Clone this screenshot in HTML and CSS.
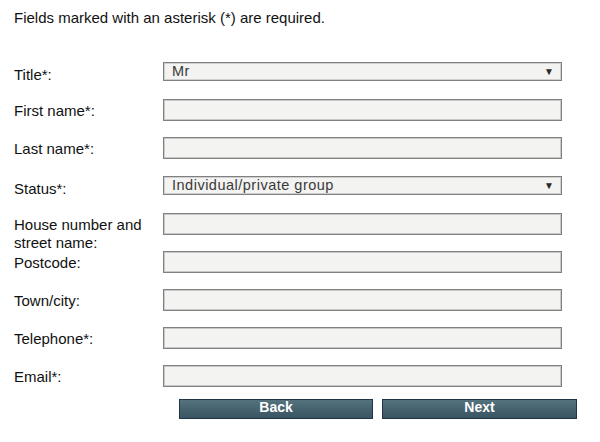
FILE: index.html
```html
<!DOCTYPE html>
<html lang="en">
<head>
<meta charset="utf-8">
<title>Details</title>
<link rel="stylesheet" href="styles.css">
</head>
<body>
<div class="page">
  <p class="intro">Fields marked with an asterisk (*) are required.</p>
  <form class="form">
    <label class="label label-title" for="title">Title*:</label>
    <div class="select-wrap">
      <select id="title" class="select"><option>Mr</option></select>
      <span class="arrow">&#9660;</span>
    </div>

    <label class="label" for="first">First name*:</label>
    <input id="first" class="input" type="text">

    <label class="label" for="last">Last name*:</label>
    <input id="last" class="input" type="text">

    <label class="label label-title" for="status">Status*:</label>
    <div class="select-wrap">
      <select id="status" class="select"><option>Individual/private group</option></select>
      <span class="arrow">&#9660;</span>
    </div>

    <label class="label" for="street">House number and street name:</label>
    <input id="street" class="input" type="text">

    <label class="label" for="postcode">Postcode:</label>
    <input id="postcode" class="input" type="text">

    <label class="label" for="town">Town/city:</label>
    <input id="town" class="input" type="text">

    <label class="label" for="phone">Telephone*:</label>
    <input id="phone" class="input" type="text">

    <label class="label" for="email">Email*:</label>
    <input id="email" class="input" type="text">

    <div class="buttons">
      <button type="button" class="btn">Back</button>
      <button type="button" class="btn">Next</button>
    </div>
  </form>
</div>
</body>
</html>
```
FILE: styles.css
```css
html, body {
  margin: 0;
  padding: 0;
  background: #ffffff;
}
body {
  font-family: "Liberation Sans", Arial, sans-serif;
  color: #111111;
}
.page {
  padding: 9px 0 0 14px;
}
.intro {
  margin: 0;
  font-size: 15px;
  line-height: 18px;
}
.form {
  margin-top: 34px;
  display: grid;
  grid-template-columns: 149px 399px;
  grid-auto-rows: 22px;
  row-gap: 16px;
}
.label {
  font-size: 15px;
  line-height: 17.5px;
  padding-top: 3px;
  white-space: normal;
}
.label-title {
  padding-top: 5px;
}
.input {
  box-sizing: border-box;
  width: 399px;
  height: 22px;
  margin: 0;
  border: 1px solid #808080;
  box-shadow: inset 0 0 0 1px #c9c9c9;
  background: #f3f3f2;
  padding: 0 6px;
  font-family: "Liberation Sans", Arial, sans-serif;
  font-size: 13px;
  outline: none;
}
.select-wrap {
  position: relative;
  width: 399px;
  height: 19px;
  margin-top: 1px;
}
.select {
  -webkit-appearance: none;
  appearance: none;
  box-sizing: border-box;
  width: 399px;
  height: 19px;
  margin: 0;
  border: 1px solid #808080;
  box-shadow: inset 0 0 0 1px #cfcfcf;
  background: #f3f3f2;
  border-radius: 0;
  padding: 0 0 0 8px;
  font-family: "Liberation Sans", Arial, sans-serif;
  font-size: 14.5px;
  letter-spacing: 0.5px;
  line-height: 17px;
  color: #3a3a3a;
  outline: none;
}
.arrow {
  position: absolute;
  right: 8px;
  top: 4px;
  font-size: 10px;
  line-height: 11px;
  color: #2a2a2a;
  pointer-events: none;
}
.buttons {
  grid-column: 2;
  margin-top: -4px;
  padding-left: 16px;
  display: flex;
  gap: 9px;
  height: 20px;
}
.btn {
  flex-shrink: 0;
  box-sizing: border-box;
  width: 194px;
  height: 20px;
  margin: 0;
  padding: 0 0 3px 0;
  border: 1px solid #1f3545;
  background: linear-gradient(to bottom, #55727f 0%, #46626f 50%, #3a5563 100%);
  color: #ffffff;
  font-family: "Liberation Sans", Arial, sans-serif;
  font-weight: bold;
  font-size: 14px;
  line-height: 15px;
  cursor: pointer;
}
.btn + .btn {
  width: 195px;
}
```
